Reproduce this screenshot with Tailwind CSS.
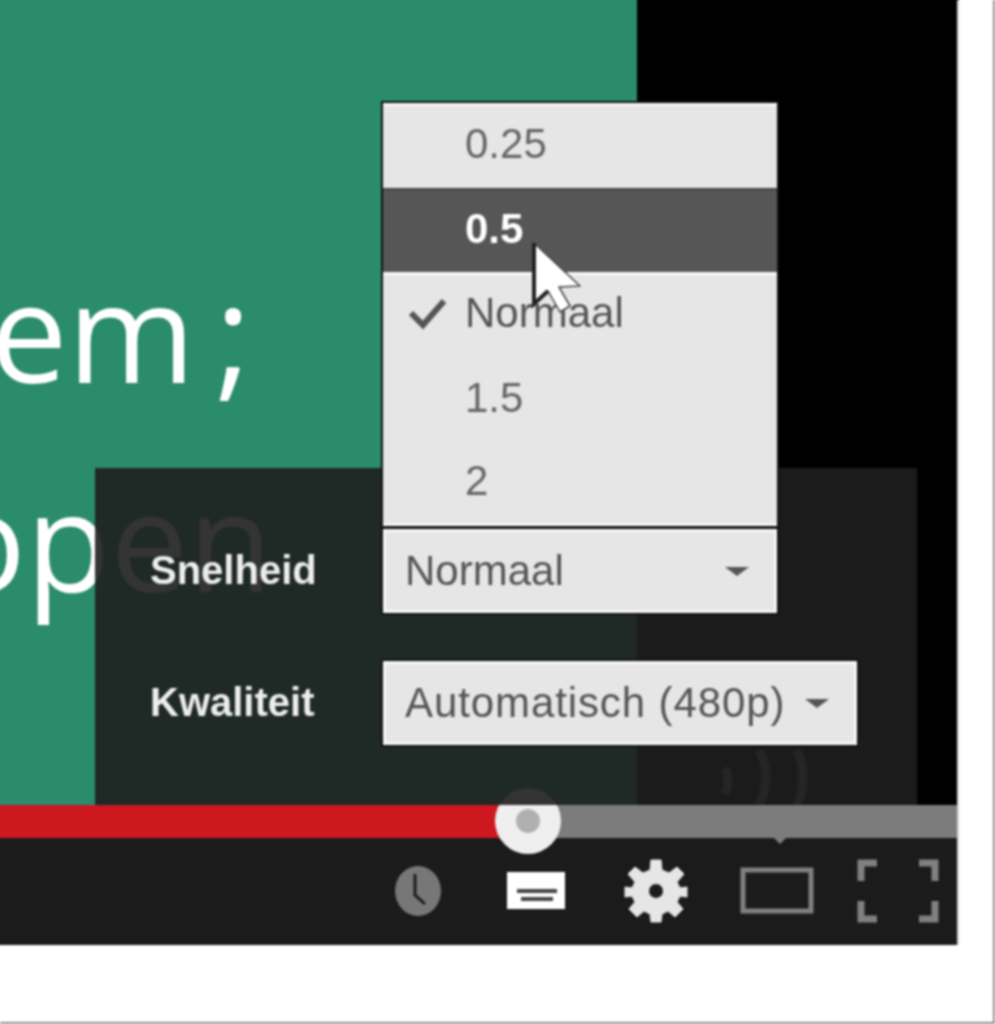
<!DOCTYPE html>
<html lang="en">
<head>
    <meta charset="UTF-8">
    <meta name="viewport" content="width=device-width, initial-scale=1.0">
    <title>Videospeler</title>
    <script src="https://cdn.jsdelivr.net/npm/@tailwindcss/browser@4"></script>
</head>
<body class="bg-white">
    <div class="w-[995px] h-[1024px] overflow-hidden">
    <div class="relative w-[995px] h-[1024px] bg-white border-r-2 border-b-2 border-[#8a8a8a] blur-[0.8px] font-['Liberation_Sans',Arial,sans-serif]">
        <div class="flex flex-col w-[957px] h-[945px] bg-black border-r-2 border-[#d4d4d4] box-content shadow-[0_-6px_0_#000000]">

            <!-- video frame -->
            <div class="relative h-[805px] flex-none bg-black">
                <div class="relative w-[637px] h-full bg-[#2b8c6c] shadow-[-6px_0_0_#2b8c6c,0_-6px_0_#2b8c6c,-6px_-6px_0_#2b8c6c]">
                    <span class="absolute left-[-10px] top-[247px] text-[138px] leading-[164px] font-medium text-white whitespace-nowrap font-['Open_Sans',sans-serif]">em<span class="ml-[20px]">;</span></span>
                    <span class="absolute left-[-57px] top-[456px] text-[138px] leading-[164px] font-medium text-white whitespace-nowrap font-['Open_Sans',sans-serif]">open</span>
                </div>

                <!-- settings panel -->
                <div class="absolute left-[95px] top-[468px] w-[822px] h-[337px] bg-[#1e1e1e]/90 pl-[55px] pt-[61px] flex flex-col gap-[48px]">
                    <div class="flex items-center h-[84px]">
                        <span class="w-[233px] text-[#eeeeee] font-bold text-[40px] mt-[-2px]">Snelheid</span>
                        <div class="relative w-[394px] h-[84px] bg-[#e6e6e6] border-[3px] border-[#f7f7f7] shadow-[0_0_0_2px_#111] flex items-center justify-between pl-[19px] pr-[25px] text-[#555555]">
                            <span class="text-[42px] mt-[-2px]">Normaal</span>
                            <span class="w-0 h-0 border-x-[12px] border-x-transparent border-t-[9px] border-t-[#555555]"></span>

                            <!-- speed menu -->
                            <ul class="absolute left-[-3px] bottom-[84px] w-[394px] h-[423px] flex flex-col bg-[#e6e6e6] shadow-[0_0_0_2px_#111] text-[42px] text-[#666666]">
                                <li class="h-[84.6px] flex items-center pl-[82px] shadow-[inset_0_3px_0_#f7f7f7]"><span class="mt-[-4px]">0.25</span></li>
                                <li class="h-[84.6px] flex items-center pl-[82px] bg-[#565656] text-white font-bold shadow-[inset_0_2px_0_#444444]"><span class="mt-[-3px]">0.5</span></li>
                                <li class="relative h-[84.6px] flex items-center pl-[82px] text-[#555555] shadow-[inset_0_3px_0_#f7f7f7]">
                                    <svg class="absolute left-[26px] top-[26px] w-[38px] h-[32px]" viewBox="0 0 38 32"><path d="M2 15 L14 27 L35 3" fill="none" stroke="#555555" stroke-width="6"/></svg>
                                    <span class="mt-[-3px]">Normaal</span>
                                </li>
                                <li class="h-[84.6px] flex items-center pl-[82px]"><span class="mt-[-4px]">1.5</span></li>
                                <li class="h-[84.6px] flex items-center pl-[82px] shadow-[inset_0_-3px_0_#f7f7f7]"><span class="mt-[-6px]">2</span></li>
                            </ul>
                        </div>
                    </div>
                    <div class="flex items-center h-[84px]">
                        <span class="w-[233px] text-[#eeeeee] font-bold text-[40px] mt-[-2px]">Kwaliteit</span>
                        <div class="w-[474px] h-[84px] bg-[#e6e6e6] border-[3px] border-[#f7f7f7] shadow-[0_0_0_2px_#111] flex items-center justify-between pl-[19px] pr-[25px] text-[#555555]">
                            <span class="text-[42px] tracking-[0.9px] whitespace-nowrap mt-[-2px]">Automatisch (480p)</span>
                            <span class="w-0 h-0 border-x-[12px] border-x-transparent border-t-[9px] border-t-[#555555]"></span>
                        </div>
                    </div>
                    <!-- faint sound waves in the frame behind the panel -->
                    <svg class="absolute left-[622px] top-[282px] w-[95px] h-[55px]" viewBox="0 0 95 55" fill="none" stroke="#252525" stroke-width="9"><path d="M8 18 Q14 30 8 44"/><path d="M42 0 Q56 26 42 55"/><path d="M80 0 Q92 26 80 55"/></svg>
                </div>

                <!-- mouse cursor -->
                <svg class="absolute left-[530px] top-[240px] w-[54px] h-[74px] z-10" viewBox="0 0 54 74"><path d="M4 3 L4 64 L18 51 L30 72 L40 66 L29 47 L50 46 Z" fill="#ffffff" stroke="#444444" stroke-width="1.5" stroke-linejoin="round"/><path d="M4 3 L4 64 L18 51" fill="none" stroke="#222222" stroke-width="4"/></svg>
            </div>

            <!-- progress bar -->
            <div class="relative flex h-[33px] flex-none">
                <div class="w-[500px] bg-[#cc181e] shadow-[-6px_0_0_#cc181e]"></div>
                <div class="flex-1 bg-[#7c7c7c]"></div>
                <div class="absolute left-[495px] top-[-17px] w-[66px] h-[66px] rounded-full bg-[linear-gradient(#333333_17px,#efefef_17px)] flex items-center justify-center">
                    <div class="w-[24px] h-[24px] rounded-full bg-[#b0b0b0]"></div>
                </div>
                <div class="absolute left-[774px] top-[33px] w-0 h-0 border-x-[6px] border-x-transparent border-t-[6px] border-t-[#7c7c7c]"></div>
            </div>

            <!-- controls -->
            <div class="flex flex-1 items-center justify-end bg-[#1b1b1b] shadow-[-6px_0_0_#1b1b1b] pr-[18px] pb-[2px]">
                <svg class="w-[48px] h-[52px] mr-[64px]" viewBox="0 0 48 52"><ellipse cx="24" cy="26" rx="23" ry="25" fill="#777777"/><path d="M21 9 V30 L31 39" fill="none" stroke="#1b1b1b" stroke-width="3"/></svg>
                <svg class="w-[60px] h-[40px] mr-[58px]" viewBox="0 0 60 40"><rect x="1" y="1" width="58" height="37" fill="#ffffff"/><path d="M11 20 H51" stroke="#444444" stroke-width="4"/><path d="M15 28 H47" stroke="#444444" stroke-width="4"/></svg>
                <svg class="w-[64px] h-[64px] mr-[52px]" viewBox="0 0 64 64"><path d="M27 1 H37 L38 11 L45 14 L53 8 L60 15 L53 23 L56 29 L63 28 V38 L56 37 L53 43 L59 50 L51 58 L44 52 L38 55 L37 63 H27 L26 55 L20 52 L13 58 L5 50 L11 43 L8 37 L1 38 V28 L8 29 L11 23 L4 15 L11 8 L19 14 L26 11 Z" fill="#e6e6e6" stroke="#e6e6e6" stroke-width="1" stroke-linejoin="round"/><circle cx="32" cy="32" r="7" fill="#1b1b1b"/></svg>
                <svg class="w-[74px] h-[48px] mr-[43px]" viewBox="0 0 74 48" fill="none"><rect x="3" y="3" width="68" height="41" stroke="#808080" stroke-width="5"/></svg>
                <svg class="w-[82px] h-[64px]" viewBox="0 0 82 64" fill="none" stroke="#808080" stroke-width="7"><path d="M20 4 H4 V22"/><path d="M62 4 H78 V22"/><path d="M4 42 V60 H20"/><path d="M78 42 V60 H62"/></svg>
            </div>
        </div>
    </div>
    </div>
</body>
</html>
